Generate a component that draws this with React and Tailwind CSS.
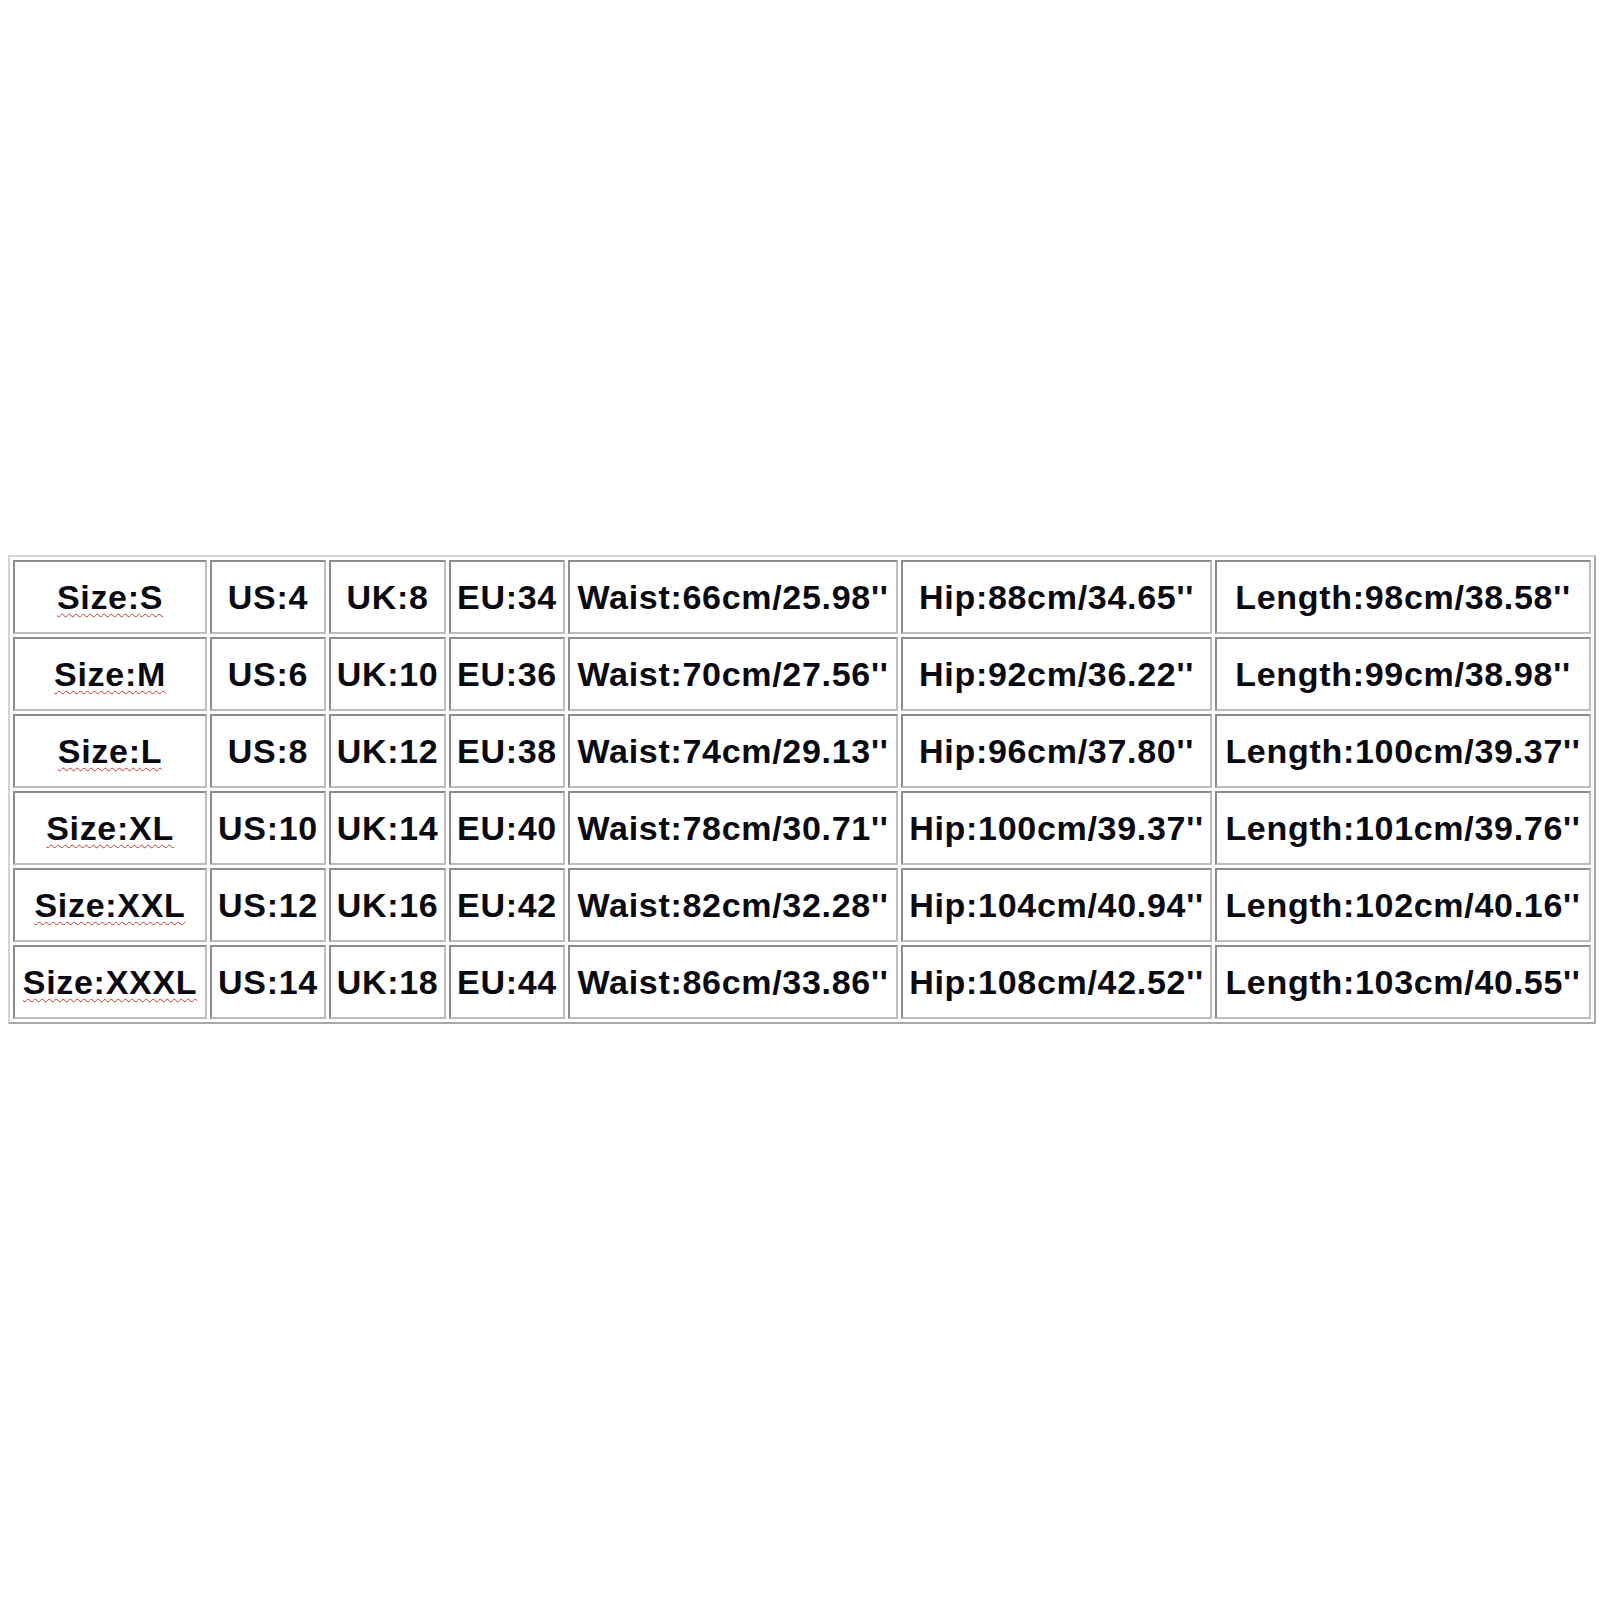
const rows = [
  ["S", "US:4", "UK:8", "EU:34", "Waist:66cm/25.98''", "Hip:88cm/34.65''", "Length:98cm/38.58''"],
  ["M", "US:6", "UK:10", "EU:36", "Waist:70cm/27.56''", "Hip:92cm/36.22''", "Length:99cm/38.98''"],
  ["L", "US:8", "UK:12", "EU:38", "Waist:74cm/29.13''", "Hip:96cm/37.80''", "Length:100cm/39.37''"],
  ["XL", "US:10", "UK:14", "EU:40", "Waist:78cm/30.71''", "Hip:100cm/39.37''", "Length:101cm/39.76''"],
  ["XXL", "US:12", "UK:16", "EU:42", "Waist:82cm/32.28''", "Hip:104cm/40.94''", "Length:102cm/40.16''"],
  ["XXXL", "US:14", "UK:18", "EU:44", "Waist:86cm/33.86''", "Hip:108cm/42.52''", "Length:103cm/40.55''"],
];

const widths = ["w-[194px]", "w-[116px]", "w-[117px]", "w-[116px]", "w-[330px]", "w-[311px]", "w-[376px]"];

const cell =
  "h-[74px] p-0 text-center align-middle border-2 border-t-[#8c8c8c] border-l-[#8c8c8c] border-b-[#bdbdbd] border-r-[#bdbdbd] whitespace-nowrap";

export default function App() {
  return (
    <div className="w-[1600px] h-[1600px] bg-white pt-[555px] pl-[8px] font-['Liberation_Sans',Arial,sans-serif]">
      <table className="table-fixed border-separate border-spacing-[3px] border-2 border-t-[#d4d4d4] border-l-[#d4d4d4] border-b-[#a8a8a8] border-r-[#a8a8a8] text-[34px] font-bold tracking-[0.7px] text-[#0a0a12] leading-none">
        <tbody>
          {rows.map((r) => (
            <tr key={r[0]}>
              <td className={`${cell} ${widths[0]}`}>
                <span className="underline decoration-wavy decoration-[#c0392b] decoration-1 underline-offset-[4px]">
                  Size:{r[0]}
                </span>
              </td>
              {r.slice(1).map((v, i) => (
                <td key={i} className={`${cell} ${widths[i + 1]}`}>
                  {v}
                </td>
              ))}
            </tr>
          ))}
        </tbody>
      </table>
    </div>
  );
}
